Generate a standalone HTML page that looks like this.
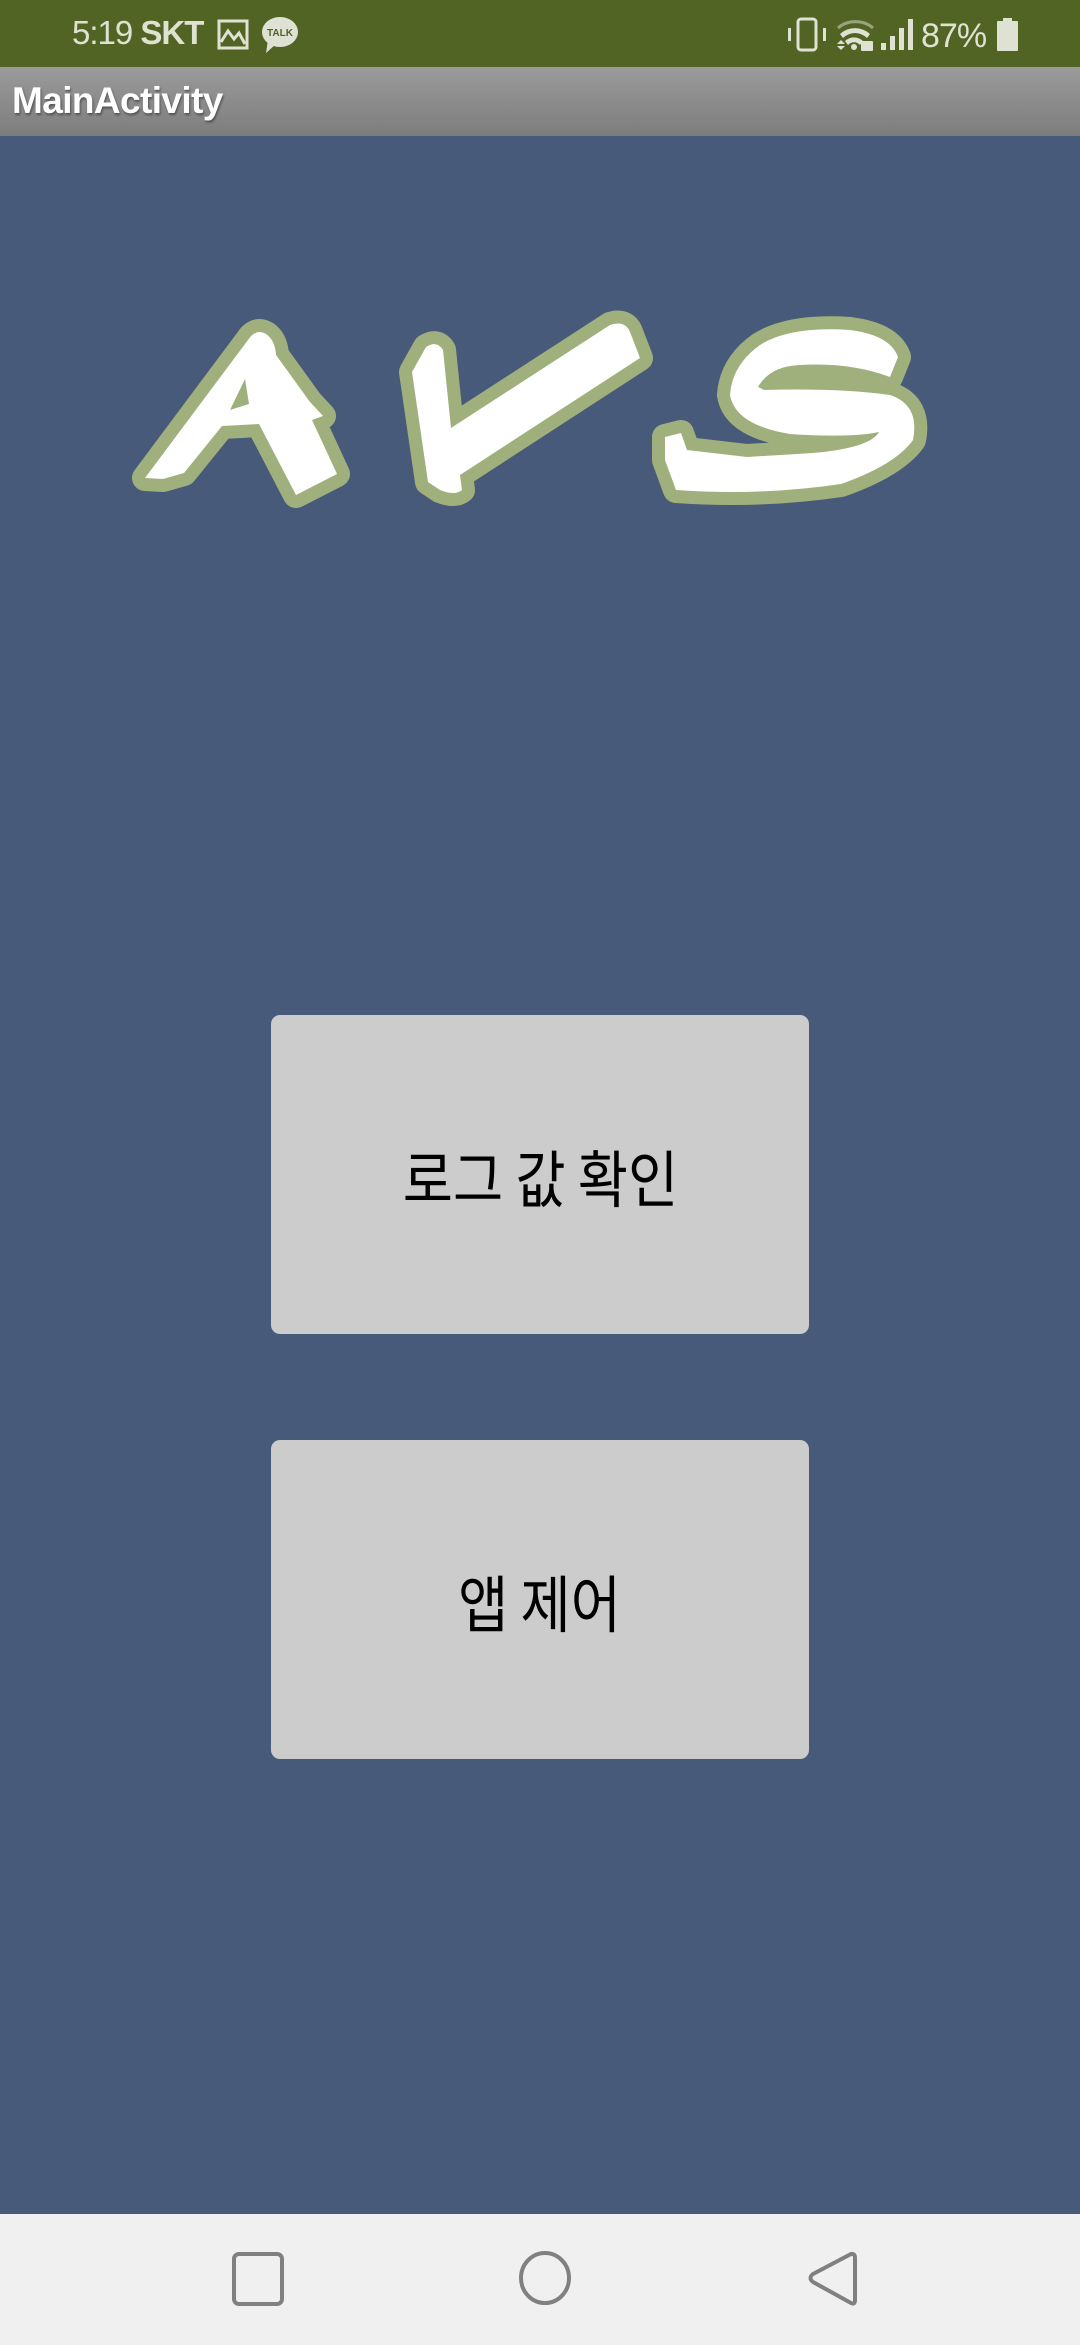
<!DOCTYPE html>
<html><head><meta charset="utf-8"><style>
*{margin:0;padding:0;box-sizing:border-box}
html{background:#f0f0f0}
html,body{width:1080px;height:2340px}
body{position:relative;overflow:hidden;background:#f0f0f0;font-family:"Liberation Sans","Noto Sans CJK KR",sans-serif}
.main{position:absolute;left:0;top:130px;width:1080px;height:2084px;background:#485a7a}
.sb{position:absolute;left:0;top:0;width:1080px;height:67px;background:#526423;color:#dfe2d3}
.tb{position:absolute;left:0;top:67px;width:1080px;height:69px;background:linear-gradient(#9b9b9b,#7d7d7d)}
.tb span{position:absolute;left:12px;top:13px;font-size:37px;font-weight:bold;color:#fff;letter-spacing:-0.6px;text-shadow:1px 2px 2px rgba(0,0,0,.4)}
.btn{position:absolute;left:271px;width:538px;height:319px;background:#cccccc;border-radius:9px;display:flex;align-items:center;justify-content:center}
.btn span{font-family:"Noto Sans CJK KR","NanumGothic",sans-serif;font-size:62px;color:#000;transform:scaleX(.88);white-space:nowrap}
.nav{position:absolute;left:0;top:2214px;height:130px;width:1080px;background:#f0f0f0}
</style></head><body>
<div class="main"></div>
<div class="sb">
<div style="position:absolute;left:72px;top:14px;font-size:33px;letter-spacing:-1px">5:19 <b>SKT</b></div>
<svg style="position:absolute;left:0;top:0" width="1080" height="67">
<g fill="none" stroke="#dfe2d3" stroke-width="3">
<rect x="219" y="21" width="28" height="27"/>
<path d="M221 42 L228 31 L234 39 L239 33 L245 44"/>
<rect x="798" y="19" width="18" height="31" rx="3"/>
</g>
<ellipse cx="280" cy="32" rx="18" ry="15" fill="#dfe2d3"/>
<path d="M268 40 L266 53 L276 44z" fill="#dfe2d3"/>
<text x="280" y="36" font-size="10" font-weight="bold" fill="#526423" text-anchor="middle" font-family="Liberation Sans">TALK</text>
<g fill="#dfe2d3">
<rect x="788" y="28" width="3" height="13"/><rect x="823" y="28" width="3" height="13"/>
<path d="M840 34 a22 22 0 0 1 30 0 l-3 4 a17 17 0 0 0 -24 0z"/>
<path d="M845 41 a13 13 0 0 1 18 0 l-3 4 a8 8 0 0 0 -12 0z"/>
<circle cx="854" cy="47" r="3"/>
<rect x="861" y="41" width="12" height="10" rx="1"/>
<path d="M837 44 l4 -4 l4 4z M837 46 l4 4 l4 -4z"/>
<rect x="881" y="43" width="5" height="7"/><rect x="890" y="36" width="5" height="14"/><rect x="899" y="28" width="5" height="22"/><rect x="908" y="19" width="5" height="31"/>
<rect x="997" y="21" width="21" height="30" rx="1"/><rect x="1003" y="18" width="9" height="4"/>
</g>
<path d="M838 28 a24 20 0 0 1 35 0" stroke="#9aa37e" stroke-width="3" fill="none"/>
<text x="921" y="47" font-size="34" fill="#dfe2d3" font-family="Liberation Sans" letter-spacing="-1">87%</text>
</svg>
</div>
<div class="tb"><span>MainActivity</span></div>

<svg style="position:absolute;left:0;top:0" width="1080" height="600">
<g fill="#fff" stroke="#a0b07d" stroke-width="26" stroke-linejoin="round" paint-order="stroke" fill-rule="evenodd">
<path d="M145 478 L248 340 Q256 328 266 334 Q275 340 276 355 L310 402 L323 416 L312 420 L337 474 L296 495 L259 424 L222 426 L184 473 L163 479 Z M245 379 L249 404 L230 410 Z"/>
<path d="M412 372 L426 347 Q437 340 443 350 L451 428 L610 325 Q625 320 630 332 L640 358 L460 475 L462 490 Q455 496 440 490 L428 482 Z"/>
<path d="M758 387 Q770 366 800 365 Q850 362 890 377 L898 357 Q890 335 850 330 Q790 326 760 345 Q732 365 730 395 Q735 425 790 434 Q850 438 879 432 Q870 448 813 453 L747 457 L687 450 L681 433 L665 437 L665 460 L676 490 Q760 496 841 484 Q895 465 913 440 Q920 405 890 395 Q840 388 764 390 Z"/>
</g>
</svg>

<div class="btn" style="top:1015px"><span>로그 값 확인</span></div>
<div class="btn" style="top:1440px"><span>앱 제어</span></div>

<div class="nav">
<svg width="1080" height="126">
<g fill="none" stroke="#808080" stroke-width="4">
<rect x="234" y="40" width="48" height="50" rx="5"/>
<ellipse cx="545" cy="64" rx="24" ry="25"/>
<path d="M851 40 Q855 39 855 44 L855 86 Q855 91 851 89 L813 68 Q808 64 813 60 Z" stroke-linejoin="round"/>
</g>
</svg>
</div>
</body></html>
